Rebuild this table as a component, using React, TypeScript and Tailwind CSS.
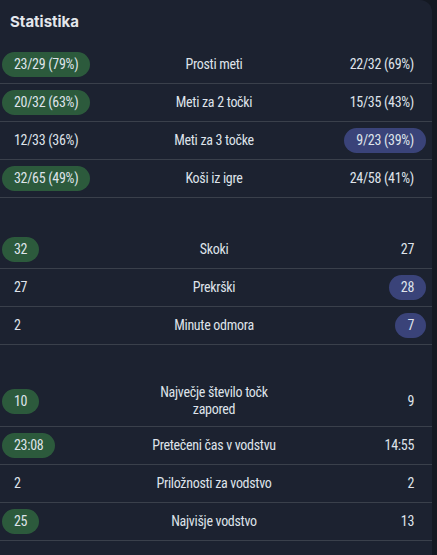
import React from 'react';

type Side = { v: string; pill?: 'green' | 'blue' };
type Row = { left: Side; label: string; right: Side; tall?: boolean };

const groups: Row[][] = [
  [
    { left: { v: '23/29 (79%)', pill: 'green' }, label: 'Prosti meti', right: { v: '22/32 (69%)' } },
    { left: { v: '20/32 (63%)', pill: 'green' }, label: 'Meti za 2 točki', right: { v: '15/35 (43%)' } },
    { left: { v: '12/33 (36%)' }, label: 'Meti za 3 točke', right: { v: '9/23 (39%)', pill: 'blue' } },
    { left: { v: '32/65 (49%)', pill: 'green' }, label: 'Koši iz igre', right: { v: '24/58 (41%)' } },
  ],
  [
    { left: { v: '32', pill: 'green' }, label: 'Skoki', right: { v: '27' } },
    { left: { v: '27' }, label: 'Prekrški', right: { v: '28', pill: 'blue' } },
    { left: { v: '2' }, label: 'Minute odmora', right: { v: '7', pill: 'blue' } },
  ],
  [
    { left: { v: '10', pill: 'green' }, label: 'Največje število točk zapored', right: { v: '9' }, tall: true },
    { left: { v: '23:08', pill: 'green' }, label: 'Pretečeni čas v vodstvu', right: { v: '14:55' } },
    { left: { v: '2' }, label: 'Priložnosti za vodstvo', right: { v: '2' } },
    { left: { v: '25', pill: 'green' }, label: 'Najvišje vodstvo', right: { v: '13' } },
  ],
];

const Value: React.FC<{ side: Side }> = ({ side }) => (
  <span
    className={
      'inline-flex h-[25px] items-center rounded-full px-3 ' +
      (side.pill === 'green' ? 'bg-[#2c5a3c] ' : side.pill === 'blue' ? 'bg-[#3a4379] ' : '')
    }
  >
    {side.v}
  </span>
);

export default function App() {
  return (
    <div className="w-[437px] h-[555px] bg-[#141922] overflow-hidden">
      <div
        className="w-[432px] h-full bg-[#1c2230] rounded-tr-xl text-[#dfe3ea] text-[14px] tracking-[-0.3px]"
        style={{ fontFamily: '"Roboto Condensed", "Arial Narrow", Roboto, sans-serif' }}
      >
        {/* Header */}
        <div className="h-[46px] pl-[10px] pt-[11px]">
          <h2 className="text-[15px] font-bold tracking-normal text-[#e4e7ec]" style={{ fontFamily: 'Inter, sans-serif' }}>
            Statistika
          </h2>
        </div>

        {groups.map((rows, gi) => (
          <div key={gi} className={gi === 1 ? 'mt-[33px]' : gi === 2 ? 'mt-[31px]' : ''}>
            {rows.map((r, ri) => (
              <div
                key={ri}
                className={
                  'grid grid-cols-[100px_1fr_100px] items-center border-b border-[#3a404b] pl-[2px] pr-[6px] ' +
                  (r.tall ? 'py-[8px]' : 'py-[6px]')
                }
              >
                <div className="flex justify-start">
                  <Value side={r.left} />
                </div>
                <div className="text-center leading-[17px] px-[50px]">{r.label}</div>
                <div className="flex justify-end">
                  <Value side={r.right} />
                </div>
              </div>
            ))}
          </div>
        ))}
      </div>
    </div>
  );
}
